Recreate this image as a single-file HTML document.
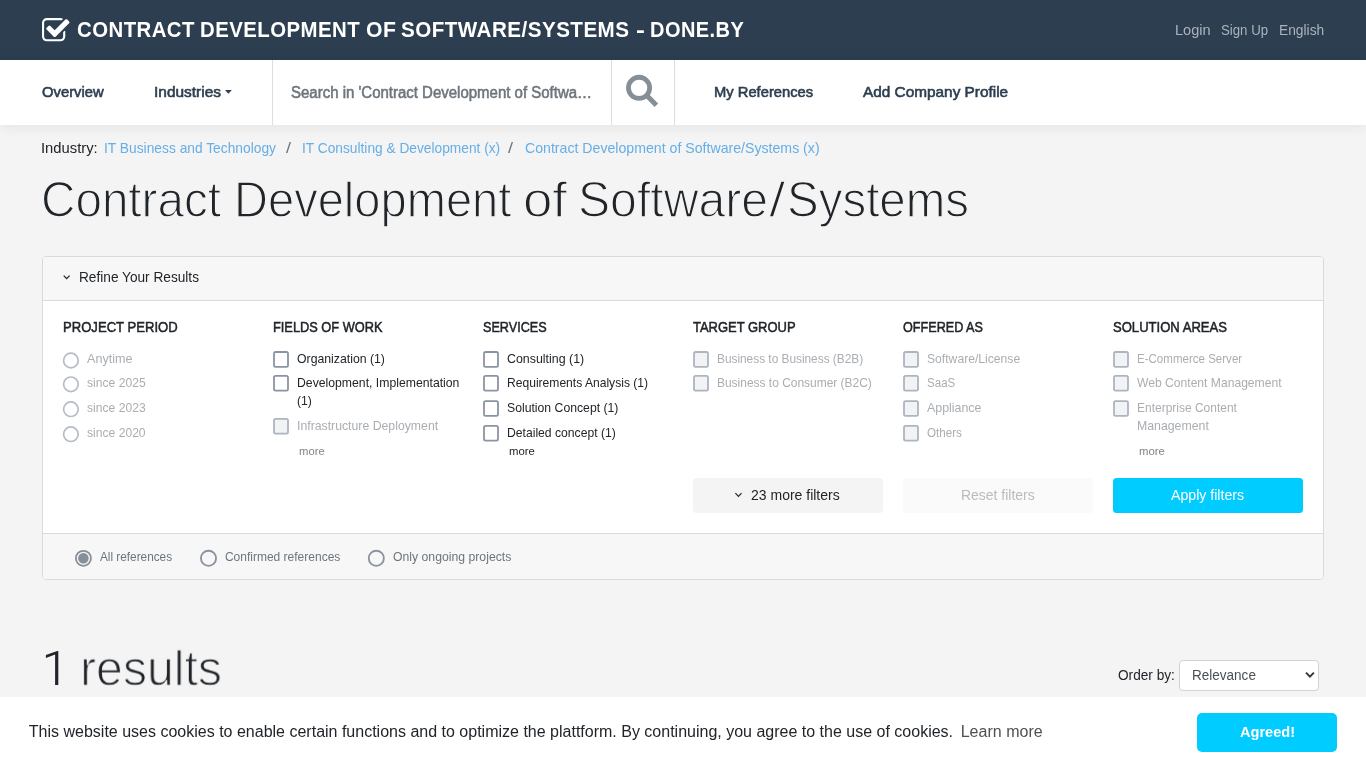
<!DOCTYPE html>
<html lang="en">
<head>
<meta charset="utf-8">
<title>Contract Development of Software/Systems - done.by</title>
<style>
*{box-sizing:border-box;margin:0;padding:0}
html,body{width:1366px;height:768px;overflow:hidden}
body{font-family:"Liberation Sans",sans-serif;background:#f4f4f4;color:#212529;position:relative}
.abs{position:absolute;display:block;overflow:visible}
.t{position:absolute;white-space:nowrap;font-family:"Liberation Sans",sans-serif;transform-origin:0 0}
#w{position:absolute;left:0;top:0;width:1366px;height:768px;will-change:transform}
#top{position:absolute;left:0;top:0;width:1366px;height:60px;background:#2c3e50}
#nav{position:absolute;left:0;top:60px;width:1366px;height:65px;background:#fff;box-shadow:0 0 14px rgba(0,0,0,.09)}
.vline{position:absolute;top:60px;width:1px;height:65px;background:#dedede}
#card{position:absolute;left:42px;top:256px;width:1282px;height:324px;background:#fff;border:1px solid #dadada;border-radius:4px;overflow:hidden}
#chead{position:absolute;left:0;top:0;width:1280px;height:44px;background:#f7f7f7;border-bottom:1px solid #dadada}
#cfoot{position:absolute;left:0;top:276px;width:1280px;height:46px;background:#f7f7f7;border-top:1px solid #dadada}
.cb{position:absolute;width:16px;height:16.4px;border:1.7px solid #8d97a7;border-radius:2.5px;background:#fff}
.cb.d{border-color:#b7bec9;background:#eef0f3}
.rd{position:absolute;width:16.2px;height:16.2px;border:1.7px solid #b7bec9;border-radius:50%;background:#fff}
.rd.f{width:16.7px;height:16.7px;border:1.8px solid #8b95a1;background:#f7f7f7}
.rd.on{border-color:#868e96;background:#dedede}
.rd.on i{position:absolute;left:1.9px;top:1.9px;width:9.3px;height:9.3px;border-radius:50%;background:#868e96}
.btn{position:absolute;top:478px;width:190px;height:35px;border-radius:3.5px}
#sel{position:absolute;left:1179px;top:660.4px;width:139.8px;height:30.4px;border:1px solid #ced4da;border-radius:4px;background:#fff}
#cookie{position:absolute;left:0;top:697px;width:1366px;height:71px;background:#fff}
#agree{position:absolute;left:1197px;top:713px;width:140px;height:39px;border-radius:5px;background:#00ccff}
</style>
</head>
<body>
<div id="w">
<div id="top"></div>
<svg class="abs" style="left:42.4px;top:15.7px" width="27.5" height="29.6" viewBox="0 0 1664 1792"><path fill="#fff" d="M1408 930v318q0 119-84.500 203.500t-203.500 84.500h-832q-119 0-203.500-84.500t-84.500-203.500v-832q0-119 84.500-203.500t203.500-84.500h832q63 0 117 25 15 7 18 23 3 17-9 29l-49 49q-10 10-23 10-3 0-9-2-23-6-45-6h-832q-66 0-113 47t-47 113v832q0 66 47 113t113 47h832q66 0 113-47t47-113v-254q0-13 9-22l64-64q10-10 23-10 6 0 12 3 20 8 20 29zM1639 441l-814 814q-24 24-57 24t-57-24l-430-430q-24-24-24-57t24-57l110-110q24-24 57-24t57 24l263 263 647-647q24-24 57-24t57 24l110 110q24 24 24 57t-24 57z"/></svg>
<div class="t" style="left:77.06px;top:15px;font-size:22.5px;line-height:29px;color:#fff;letter-spacing:0.500px;font-weight:bold;transform:translateY(0.4px) scaleX(0.9054);">CONTRACT</div>
<div class="t" style="left:200.34px;top:15px;font-size:22.5px;line-height:29px;color:#fff;letter-spacing:0.500px;font-weight:bold;transform:translateY(0.4px) scaleX(0.9059);">DEVELOPMENT</div>
<div class="t" style="left:365.53px;top:15px;font-size:22.5px;line-height:29px;color:#fff;letter-spacing:0.500px;font-weight:bold;transform:translateY(0.4px) scaleX(0.9401);">OF</div>
<div class="t" style="left:401.31px;top:15px;font-size:22.5px;line-height:29px;color:#fff;letter-spacing:0.500px;font-weight:bold;transform:translateY(0.4px) scaleX(0.9165);">SOFTWARE/SYSTEMS</div>
<div class="t" style="left:635.65px;top:15px;font-size:22.5px;line-height:29px;color:#fff;letter-spacing:0.000px;font-weight:bold;transform:translateY(0.4px) scaleX(1.1903);">-</div>
<div class="t" style="left:650.06px;top:15px;font-size:22.5px;line-height:29px;color:#fff;letter-spacing:0.500px;font-weight:bold;transform:translateY(0.4px) scaleX(0.8896);">DONE.BY</div>
<div class="t" style="left:1174.81px;top:21px;font-size:14px;line-height:18px;color:#aab3bc;letter-spacing:0.000px;transform:scaleX(1.0405);">Login</div>
<div class="t" style="left:1220.90px;top:21px;font-size:14px;line-height:18px;color:#aab3bc;letter-spacing:0.000px;transform:scaleX(0.9448);">Sign Up</div>
<div class="t" style="left:1278.97px;top:21px;font-size:14px;line-height:18px;color:#aab3bc;letter-spacing:0.000px;transform:scaleX(0.9850);">English</div>
<div id="nav"></div>
<div class="vline" style="left:272px"></div>
<div class="vline" style="left:611px"></div>
<div class="vline" style="left:674px"></div>
<div class="t" style="left:42.10px;top:82px;font-size:15px;line-height:20px;color:#2c3e50;letter-spacing:0.000px;-webkit-text-stroke:0.6px #2c3e50;transform:scaleX(0.9864);">Overview</div>
<div class="t" style="left:153.87px;top:82px;font-size:15px;line-height:20px;color:#2c3e50;letter-spacing:0.000px;-webkit-text-stroke:0.6px #2c3e50;transform:scaleX(1.0300);">Industries</div>
<svg class="abs" style="left:225.1px;top:90.4px" width="6.8" height="3.8" viewBox="0 0 68 38"><path fill="#2c3e50" d="M0 0H68L34 38z"/></svg>
<div class="t" style="left:713.79px;top:82px;font-size:15px;line-height:20px;color:#2c3e50;letter-spacing:0.000px;-webkit-text-stroke:0.6px #2c3e50;transform:scaleX(0.9829);">My References</div>
<div class="t" style="left:863.17px;top:82px;font-size:15px;line-height:20px;color:#2c3e50;letter-spacing:0.000px;-webkit-text-stroke:0.6px #2c3e50;transform:scaleX(1.0238);">Add Company Profile</div>
<div class="t" style="left:291.02px;top:82px;font-size:16px;line-height:21px;color:#6c757d;letter-spacing:0.000px;-webkit-text-stroke:0.55px #6c757d;transform:scaleX(0.9365);">Search in 'Contract Development of Softwa…</div>
<svg class="abs" style="left:620px;top:70px" width="44" height="44" viewBox="620 70 44 44"><circle cx="639.05" cy="87.85" r="10.6" fill="none" stroke="#868e96" stroke-width="4.8"/><path d="M647.3 96.1L656.35 105.15" stroke="#868e96" stroke-width="5" stroke-linecap="butt"/></svg>
<div class="t" style="left:41.13px;top:139px;font-size:14.4px;line-height:19px;color:#212529;letter-spacing:-0.000px;transform:scaleX(1.0277);">Industry:</div>
<div class="t" style="left:104.23px;top:139px;font-size:14.4px;line-height:19px;color:#66aee6;letter-spacing:0.000px;transform:scaleX(0.9584);">IT Business and Technology</div>
<div class="t" style="left:285.50px;top:139px;font-size:14.4px;line-height:19px;color:#6c757d;letter-spacing:0.000px;transform:scaleX(1.2506);">/</div>
<div class="t" style="left:301.73px;top:139px;font-size:14.4px;line-height:19px;color:#66aee6;letter-spacing:0.000px;transform:scaleX(0.9542);">IT Consulting &amp; Development (x)</div>
<div class="t" style="left:508.10px;top:139px;font-size:14.4px;line-height:19px;color:#6c757d;letter-spacing:0.000px;transform:scaleX(1.2506);">/</div>
<div class="t" style="left:524.68px;top:139px;font-size:14.4px;line-height:19px;color:#66aee6;letter-spacing:0.000px;transform:scaleX(0.9823);">Contract Development of Software/Systems (x)</div>
<div class="t" style="left:41.18px;top:166px;font-size:50.5px;line-height:66px;color:#212529;letter-spacing:0.000px;-webkit-text-stroke:1.3px #f4f4f4;transform:translateY(0.9px) scaleX(0.9430);">Contract</div>
<div class="t" style="left:233.74px;top:166px;font-size:50.5px;line-height:66px;color:#212529;letter-spacing:0.000px;-webkit-text-stroke:1.3px #f4f4f4;transform:translateY(0.9px) scaleX(0.9320);">Development</div>
<div class="t" style="left:523.28px;top:166px;font-size:50.5px;line-height:66px;color:#212529;letter-spacing:0.000px;-webkit-text-stroke:1.3px #f4f4f4;transform:translateY(0.9px) scaleX(1.0457);">of</div>
<div class="t" style="left:578.31px;top:166px;font-size:50.5px;line-height:66px;color:#212529;letter-spacing:0.000px;-webkit-text-stroke:1.3px #f4f4f4;transform:translateY(0.9px) scaleX(0.9535);">Software</div>
<div class="t" style="left:769.20px;top:166px;font-size:50.5px;line-height:66px;color:#212529;letter-spacing:0.000px;-webkit-text-stroke:1.3px #f4f4f4;transform:translateY(0.9px) scaleX(1.1618);">/</div>
<div class="t" style="left:787.04px;top:166px;font-size:50.5px;line-height:66px;color:#212529;letter-spacing:0.000px;-webkit-text-stroke:1.3px #f4f4f4;transform:translateY(0.9px) scaleX(0.9404);">Systems</div>
<div id="card"><div id="chead"></div><div id="cfoot"></div></div>
<svg class="abs" style="left:62px;top:273px" width="10" height="8" viewBox="62 273 10 8"><path d="M63.7 275.6L66.65 278.6L69.6 275.6" fill="none" stroke="#212529" stroke-width="1.3"/></svg>
<div class="t" style="left:78.98px;top:268px;font-size:14px;line-height:18px;color:#212529;letter-spacing:0.000px;transform:scaleX(0.9756);">Refine Your Results</div>
<div class="t" style="left:62.63px;top:318px;font-size:14.4px;line-height:19px;color:#212529;letter-spacing:0.000px;-webkit-text-stroke:0.5px #212529;transform:scaleX(0.9095);">PROJECT PERIOD</div>
<div class="t" style="left:272.65px;top:318px;font-size:14.4px;line-height:19px;color:#212529;letter-spacing:0.000px;-webkit-text-stroke:0.5px #212529;transform:scaleX(0.8893);">FIELDS OF WORK</div>
<div class="t" style="left:483.13px;top:318px;font-size:14.4px;line-height:19px;color:#212529;letter-spacing:0.000px;-webkit-text-stroke:0.5px #212529;transform:scaleX(0.8778);">SERVICES</div>
<div class="t" style="left:693.41px;top:318px;font-size:14.4px;line-height:19px;color:#212529;letter-spacing:0.000px;-webkit-text-stroke:0.5px #212529;transform:scaleX(0.9010);">TARGET GROUP</div>
<div class="t" style="left:903.10px;top:318px;font-size:14.4px;line-height:19px;color:#212529;letter-spacing:0.000px;-webkit-text-stroke:0.5px #212529;transform:scaleX(0.8763);">OFFERED AS</div>
<div class="t" style="left:1113.11px;top:318px;font-size:14.4px;line-height:19px;color:#212529;letter-spacing:0.000px;-webkit-text-stroke:0.5px #212529;transform:scaleX(0.9078);">SOLUTION AREAS</div>
<div class="t" style="left:87.18px;top:350px;font-size:12.8px;line-height:17px;color:#aaaeb2;letter-spacing:0.000px;transform:scaleX(0.9839);">Anytime</div>
<div class="t" style="left:87.46px;top:374px;font-size:12.8px;line-height:17px;color:#aaaeb2;letter-spacing:0.000px;transform:scaleX(0.9475);">since 2025</div>
<div class="t" style="left:87.46px;top:399px;font-size:12.8px;line-height:17px;color:#aaaeb2;letter-spacing:0.000px;transform:scaleX(0.9479);">since 2023</div>
<div class="t" style="left:87.46px;top:424px;font-size:12.8px;line-height:17px;color:#aaaeb2;letter-spacing:0.000px;transform:scaleX(0.9469);">since 2020</div>
<div class="t" style="left:297.22px;top:350px;font-size:12.8px;line-height:17px;color:#212529;letter-spacing:0.000px;transform:scaleX(0.9585);">Organization (1)</div>
<div class="t" style="left:296.80px;top:374px;font-size:12.8px;line-height:17px;color:#212529;letter-spacing:0.000px;transform:scaleX(0.9553);">Development, Implementation</div>
<div class="t" style="left:297.34px;top:392px;font-size:12.8px;line-height:17px;color:#212529;letter-spacing:0.000px;transform:scaleX(0.9536);">(1)</div>
<div class="t" style="left:296.67px;top:417px;font-size:12.8px;line-height:17px;color:#aaaeb2;letter-spacing:0.000px;transform:scaleX(0.9585);">Infrastructure Deployment</div>
<div class="t" style="left:299.05px;top:444px;font-size:11.2px;line-height:15px;color:#808386;letter-spacing:0.000px;transform:scaleX(1.0063);">more</div>
<div class="t" style="left:507.07px;top:350px;font-size:12.8px;line-height:17px;color:#212529;letter-spacing:0.000px;transform:scaleX(0.9691);">Consulting (1)</div>
<div class="t" style="left:506.71px;top:374px;font-size:12.8px;line-height:17px;color:#212529;letter-spacing:0.000px;transform:scaleX(0.9445);">Requirements Analysis (1)</div>
<div class="t" style="left:507.14px;top:399px;font-size:12.8px;line-height:17px;color:#212529;letter-spacing:0.000px;transform:scaleX(0.9550);">Solution Concept (1)</div>
<div class="t" style="left:506.70px;top:424px;font-size:12.8px;line-height:17px;color:#212529;letter-spacing:0.000px;transform:scaleX(0.9505);">Detailed concept (1)</div>
<div class="t" style="left:509.15px;top:444px;font-size:11.2px;line-height:15px;color:#212529;letter-spacing:0.000px;transform:scaleX(1.0145);">more</div>
<div class="t" style="left:716.83px;top:350px;font-size:12.8px;line-height:17px;color:#aaaeb2;letter-spacing:0.000px;transform:scaleX(0.9253);">Business to Business (B2B)</div>
<div class="t" style="left:716.82px;top:374px;font-size:12.8px;line-height:17px;color:#aaaeb2;letter-spacing:0.000px;transform:scaleX(0.9343);">Business to Consumer (B2C)</div>
<div class="t" style="left:927.25px;top:350px;font-size:12.8px;line-height:17px;color:#aaaeb2;letter-spacing:0.000px;transform:scaleX(0.9494);">Software/License</div>
<div class="t" style="left:927.28px;top:374px;font-size:12.8px;line-height:17px;color:#aaaeb2;letter-spacing:0.000px;transform:scaleX(0.9026);">SaaS</div>
<div class="t" style="left:927.18px;top:399px;font-size:12.8px;line-height:17px;color:#aaaeb2;letter-spacing:0.000px;transform:scaleX(0.9692);">Appliance</div>
<div class="t" style="left:927.25px;top:424px;font-size:12.8px;line-height:17px;color:#aaaeb2;letter-spacing:0.000px;transform:scaleX(0.9080);">Others</div>
<div class="t" style="left:1136.95px;top:350px;font-size:12.8px;line-height:17px;color:#aaaeb2;letter-spacing:0.000px;transform:scaleX(0.9016);">E-Commerce Server</div>
<div class="t" style="left:1137.25px;top:374px;font-size:12.8px;line-height:17px;color:#aaaeb2;letter-spacing:0.000px;transform:scaleX(0.9465);">Web Content Management</div>
<div class="t" style="left:1136.92px;top:399px;font-size:12.8px;line-height:17px;color:#aaaeb2;letter-spacing:0.000px;transform:scaleX(0.9360);">Enterprise Content</div>
<div class="t" style="left:1136.89px;top:417px;font-size:12.8px;line-height:17px;color:#aaaeb2;letter-spacing:0.000px;transform:scaleX(0.9612);">Management</div>
<div class="t" style="left:1139.15px;top:444px;font-size:11.2px;line-height:15px;color:#808386;letter-spacing:0.000px;transform:scaleX(1.0145);">more</div>
<div class="btn" style="left:693px;background:#f4f4f4"></div>
<div class="btn" style="left:903px;background:#fafafa"></div>
<div class="btn" style="left:1113px;background:#00ccff"></div>
<svg class="abs" style="left:733px;top:490px" width="12" height="10" viewBox="733 490 12 10"><path d="M735.4 493.2L738.45 496.4L741.5 493.2" fill="none" stroke="#212529" stroke-width="1.2"/></svg>
<div class="t" style="left:751.30px;top:486px;font-size:14.4px;line-height:19px;color:#212529;letter-spacing:0.000px;transform:scaleX(0.9730);">23 more filters</div>
<div class="t" style="left:960.55px;top:486px;font-size:14.4px;line-height:19px;color:#b9bcbf;letter-spacing:0.000px;transform:scaleX(0.9694);">Reset filters</div>
<div class="t" style="left:1171.27px;top:486px;font-size:14.4px;line-height:19px;color:#fff;letter-spacing:0.000px;transform:scaleX(0.9820);">Apply filters</div>
<div class="t" style="left:100.38px;top:549px;font-size:12px;line-height:16px;color:#6c757d;letter-spacing:0.000px;transform:scaleX(0.9821);">All references</div>
<div class="t" style="left:224.89px;top:549px;font-size:12px;line-height:16px;color:#6c757d;letter-spacing:0.003px;">Confirmed references</div>
<div class="t" style="left:392.92px;top:549px;font-size:12px;line-height:16px;color:#6c757d;letter-spacing:0.000px;transform:scaleX(1.0194);">Only ongoing projects</div>
<div class="t" style="left:80.40px;top:635px;font-size:50.5px;line-height:66px;color:#212529;letter-spacing:0.000px;-webkit-text-stroke:1.3px #f4f4f4;transform:translateY(0.6px) scaleX(0.9543);">results</div>
<div class="t" style="left:1118.45px;top:666px;font-size:14px;line-height:18px;color:#212529;letter-spacing:0.000px;transform:scaleX(0.9750);">Order by:</div>
<div id="sel"></div>
<div class="t" style="left:1191.69px;top:666px;font-size:14px;line-height:18px;color:#495057;letter-spacing:0.000px;transform:scaleX(0.9661);">Relevance</div>
<svg class="abs" style="left:1303px;top:669px" width="14" height="12" viewBox="1303 669 14 12"><path d="M1306 672.6L1309.95 676.6L1313.9 672.6" fill="none" stroke="#343a40" stroke-width="2"/></svg>
<svg class="abs" style="left:0;top:0" width="1366" height="768" viewBox="0 0 1366 768"><circle cx="70.9" cy="360.5" r="7.3" fill="#fff" stroke="#b5bcc7" stroke-width="1.7"/><circle cx="70.9" cy="384.3" r="7.3" fill="#fff" stroke="#b5bcc7" stroke-width="1.7"/><circle cx="70.9" cy="409.2" r="7.3" fill="#fff" stroke="#b5bcc7" stroke-width="1.7"/><circle cx="70.9" cy="434.2" r="7.3" fill="#fff" stroke="#b5bcc7" stroke-width="1.7"/><rect x="274.00" y="352.00" width="14" height="14.8" rx="1.6" fill="#fff" stroke="#8a94a3" stroke-width="1.8"/><rect x="274.00" y="375.90" width="14" height="14.8" rx="1.6" fill="#fff" stroke="#8a94a3" stroke-width="1.8"/><rect x="274.00" y="418.90" width="14" height="14.8" rx="1.6" fill="#f1f3f5" stroke="#adb5bf" stroke-width="1.8"/><rect x="484.00" y="352.00" width="14" height="14.8" rx="1.6" fill="#fff" stroke="#8a94a3" stroke-width="1.8"/><rect x="484.00" y="375.90" width="14" height="14.8" rx="1.6" fill="#fff" stroke="#8a94a3" stroke-width="1.8"/><rect x="484.00" y="401.10" width="14" height="14.8" rx="1.6" fill="#fff" stroke="#8a94a3" stroke-width="1.8"/><rect x="484.00" y="425.90" width="14" height="14.8" rx="1.6" fill="#fff" stroke="#8a94a3" stroke-width="1.8"/><rect x="694.00" y="352.00" width="14" height="14.8" rx="1.6" fill="#f1f3f5" stroke="#adb5bf" stroke-width="1.8"/><rect x="694.00" y="375.90" width="14" height="14.8" rx="1.6" fill="#f1f3f5" stroke="#adb5bf" stroke-width="1.8"/><rect x="904.00" y="352.00" width="14" height="14.8" rx="1.6" fill="#f1f3f5" stroke="#adb5bf" stroke-width="1.8"/><rect x="904.00" y="375.90" width="14" height="14.8" rx="1.6" fill="#f1f3f5" stroke="#adb5bf" stroke-width="1.8"/><rect x="904.00" y="401.10" width="14" height="14.8" rx="1.6" fill="#f1f3f5" stroke="#adb5bf" stroke-width="1.8"/><rect x="904.00" y="425.90" width="14" height="14.8" rx="1.6" fill="#f1f3f5" stroke="#adb5bf" stroke-width="1.8"/><rect x="1114.00" y="352.00" width="14" height="14.8" rx="1.6" fill="#f1f3f5" stroke="#adb5bf" stroke-width="1.8"/><rect x="1114.00" y="375.90" width="14" height="14.8" rx="1.6" fill="#f1f3f5" stroke="#adb5bf" stroke-width="1.8"/><rect x="1114.00" y="401.10" width="14" height="14.8" rx="1.6" fill="#f1f3f5" stroke="#adb5bf" stroke-width="1.8"/><circle cx="83.4" cy="558.3" r="7.55" fill="#f1f1f2" stroke="#858e99" stroke-width="1.75"/><circle cx="83.4" cy="558.3" r="5.2" fill="#858e99"/><circle cx="208.5" cy="558.3" r="7.55" fill="#f7f7f7" stroke="#8a93a0" stroke-width="1.85"/><circle cx="376.3" cy="558.3" r="7.55" fill="#f7f7f7" stroke="#8a93a0" stroke-width="1.85"/><path fill="#212529" d="M58.3 651L58.3 684.9L55.1 684.9L55.1 654.4L45.9 657.9L45.9 655.1L57.3 651Z"/></svg>
<div id="cookie"></div>
<div class="t" style="left:28.84px;top:721px;font-size:16px;line-height:21px;color:#212529;letter-spacing:0.001px;">This website uses cookies to enable certain functions and to optimize the plattform. By continuing, you agree to the use of cookies.</div>
<div class="t" style="left:960.69px;top:721px;font-size:16px;line-height:21px;color:#4d5154;letter-spacing:0.023px;">Learn more</div>
<div id="agree"></div>
<div class="t" style="left:1239.94px;top:723px;font-size:14.4px;line-height:19px;color:#fff;letter-spacing:0.000px;font-weight:bold;transform:scaleX(1.0125);">Agreed!</div>
</div>
</body>
</html>
